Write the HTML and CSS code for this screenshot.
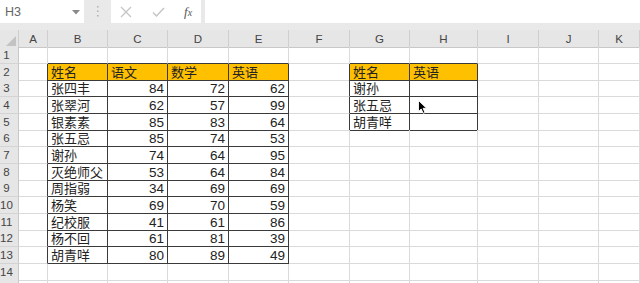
FILE: index.html
```html
<!DOCTYPE html>
<html lang="zh">
<head>
<meta charset="utf-8">
<link rel="stylesheet" href="styles.css">
</head>
<body>
<div class="app">
  <div class="fbar">
    <div class="namebox">
      <span class="ref">H3</span>
      <svg class="dd" width="8" height="5" viewBox="0 0 8 5"><path d="M0 0H8L4 4.5Z" fill="#8a8a8a"/></svg>
    </div>
    <div class="grip"><svg width="3" height="11" viewBox="0 0 3 11"><rect x="1" y="0" width="1.5" height="1.5" fill="#b0b0b0"/><rect x="1" y="4.5" width="1.5" height="1.5" fill="#b0b0b0"/><rect x="1" y="9" width="1.5" height="1.5" fill="#b0b0b0"/></svg></div>
    <div class="btns">
      <svg class="ico" width="12" height="12" viewBox="0 0 12 12"><path d="M1 1L11 11M11 1L1 11" stroke="#c4c4c4" stroke-width="1.3" fill="none"/></svg>
      <svg class="ico" width="13" height="10" viewBox="0 0 13 10"><path d="M1 5.5L4.5 9L12 1" stroke="#c4c4c4" stroke-width="1.4" fill="none"/></svg>
      <span class="fx"><i>f</i><i class="sub">x</i></span>
    </div>
    <div class="formula"></div>
  </div>

  <div class="sheet">
    <div class="row hdr">
      <div class="corner"><svg width="10" height="10" viewBox="0 0 10 10"><path d="M10 0V10H0Z" fill="#c3c3c3"/></svg></div>
      <div class="ch">A</div><div class="ch">B</div><div class="ch">C</div><div class="ch">D</div><div class="ch">E</div><div class="ch">F</div><div class="ch">G</div><div class="ch">H</div><div class="ch">I</div><div class="ch">J</div><div class="ch">K</div>
    </div>
    <div class="row">
      <div class="rh">1</div><div class="c"></div><div class="c bb"></div><div class="c bb"></div><div class="c bb"></div><div class="c bb"></div><div class="c"></div><div class="c bb"></div><div class="c bb"></div><div class="c"></div><div class="c"></div><div class="c"></div>
    </div>
    <div class="row">
      <div class="rh">2</div><div class="c br"></div><div class="c o br bb">姓名</div><div class="c o br bb">语文</div><div class="c o br bb">数学</div><div class="c o br bb">英语</div><div class="c br"></div><div class="c o br bb">姓名</div><div class="c o br bb">英语</div><div class="c"></div><div class="c"></div><div class="c"></div>
    </div>
    <div class="row">
      <div class="rh">3</div><div class="c br"></div><div class="c br bb">张四丰</div><div class="c n br bb">84</div><div class="c n br bb">72</div><div class="c n br bb">62</div><div class="c br"></div><div class="c br bb">谢孙</div><div class="c br bb"></div><div class="c"></div><div class="c"></div><div class="c"></div>
    </div>
    <div class="row">
      <div class="rh">4</div><div class="c br"></div><div class="c br bb">张翠河</div><div class="c n br bb">62</div><div class="c n br bb">57</div><div class="c n br bb">99</div><div class="c br"></div><div class="c br bb">张五忌</div><div class="c br bb"></div><div class="c"></div><div class="c"></div><div class="c"></div>
    </div>
    <div class="row">
      <div class="rh">5</div><div class="c br"></div><div class="c br bb">银素素</div><div class="c n br bb">85</div><div class="c n br bb">83</div><div class="c n br bb">64</div><div class="c br"></div><div class="c br bb">胡青咩</div><div class="c br bb"></div><div class="c"></div><div class="c"></div><div class="c"></div>
    </div>
    <div class="row">
      <div class="rh">6</div><div class="c br"></div><div class="c br bb">张五忌</div><div class="c n br bb">85</div><div class="c n br bb">74</div><div class="c n br bb">53</div><div class="c"></div><div class="c"></div><div class="c"></div><div class="c"></div><div class="c"></div><div class="c"></div>
    </div>
    <div class="row">
      <div class="rh">7</div><div class="c br"></div><div class="c br bb">谢孙</div><div class="c n br bb">74</div><div class="c n br bb">64</div><div class="c n br bb">95</div><div class="c"></div><div class="c"></div><div class="c"></div><div class="c"></div><div class="c"></div><div class="c"></div>
    </div>
    <div class="row">
      <div class="rh">8</div><div class="c br"></div><div class="c br bb">灭绝师父</div><div class="c n br bb">53</div><div class="c n br bb">64</div><div class="c n br bb">84</div><div class="c"></div><div class="c"></div><div class="c"></div><div class="c"></div><div class="c"></div><div class="c"></div>
    </div>
    <div class="row">
      <div class="rh">9</div><div class="c br"></div><div class="c br bb">周指弱</div><div class="c n br bb">34</div><div class="c n br bb">69</div><div class="c n br bb">69</div><div class="c"></div><div class="c"></div><div class="c"></div><div class="c"></div><div class="c"></div><div class="c"></div>
    </div>
    <div class="row">
      <div class="rh">10</div><div class="c br"></div><div class="c br bb">杨笑</div><div class="c n br bb">69</div><div class="c n br bb">70</div><div class="c n br bb">59</div><div class="c"></div><div class="c"></div><div class="c"></div><div class="c"></div><div class="c"></div><div class="c"></div>
    </div>
    <div class="row">
      <div class="rh">11</div><div class="c br"></div><div class="c br bb">纪校服</div><div class="c n br bb">41</div><div class="c n br bb">61</div><div class="c n br bb">86</div><div class="c"></div><div class="c"></div><div class="c"></div><div class="c"></div><div class="c"></div><div class="c"></div>
    </div>
    <div class="row">
      <div class="rh">12</div><div class="c br"></div><div class="c br bb">杨不回</div><div class="c n br bb">61</div><div class="c n br bb">81</div><div class="c n br bb">39</div><div class="c"></div><div class="c"></div><div class="c"></div><div class="c"></div><div class="c"></div><div class="c"></div>
    </div>
    <div class="row">
      <div class="rh">13</div><div class="c br"></div><div class="c br bb">胡青咩</div><div class="c n br bb">80</div><div class="c n br bb">89</div><div class="c n br bb">49</div><div class="c"></div><div class="c"></div><div class="c"></div><div class="c"></div><div class="c"></div><div class="c"></div>
    </div>
    <div class="row">
      <div class="rh">14</div><div class="c"></div><div class="c"></div><div class="c"></div><div class="c"></div><div class="c"></div><div class="c"></div><div class="c"></div><div class="c"></div><div class="c"></div><div class="c"></div><div class="c"></div>
    </div>
    <div class="row">
      <div class="rh"></div><div class="c"></div><div class="c"></div><div class="c"></div><div class="c"></div><div class="c"></div><div class="c"></div><div class="c"></div><div class="c"></div><div class="c"></div><div class="c"></div><div class="c"></div>
    </div>
  </div>

  <svg class="cursor" width="11" height="14" viewBox="0 0 11 14"><path d="M0.5 0.5V11.5L3.2 9L5.2 13.3L7 12.5L5.1 8.3H8.6Z" fill="#000" stroke="#fff" stroke-width="0.9" stroke-linejoin="round"/></svg>
</div>
</body>
</html>
```

FILE: styles.css
```css
* { box-sizing: border-box; }
html, body { margin: 0; padding: 0; }
body {
  width: 640px;
  height: 283px;
  overflow: hidden;
  background: #fff;
  font-family: "Liberation Sans", "Noto Sans CJK SC", sans-serif;
}
.app {
  position: relative;
  width: 640px;
  height: 283px;
  overflow: hidden;
}
.fbar {
  display: flex;
  height: 30px;
  padding-bottom: 7px;
  background: #e9e9e9;
}
.namebox {
  width: 84px;
  background: #fff;
  display: flex;
  align-items: center;
  justify-content: space-between;
  padding: 0 4px 0 5px;
}
.ref {
  font-size: 12.5px;
  color: #666;
}
.dd { margin-top: 1px; }
.grip {
  width: 27px;
  display: flex;
  align-items: center;
  justify-content: center;
  padding-right: 1px;
}
.btns {
  width: 90px;
  background: #fff;
  display: flex;
  align-items: center;
  padding-left: 9px;
  gap: 20px;
}
.fx {
  font-family: "Liberation Serif", serif;
  color: #555;
  font-size: 13px;
  margin-left: -1px;
}
.fx .sub { font-size: 10px; }
.formula {
  flex: 1;
  margin-left: 4px;
  background: #fff;
}
.row {
  display: grid;
  grid-template-columns: 19px 29px 60px 60px 61px 60px 61px 60px 68px 61px 60px 41px;
  height: 16.667px;
}
.row.hdr {
  height: 17px;
  background: #e6e6e6;
}
.corner {
  display: flex;
  align-items: flex-end;
  justify-content: flex-end;
  padding: 0 2px 1px 0;
  border-right: 1px solid #cfcfcf;
  border-bottom: 1px solid #c8c8c8;
}
.ch {
  border-right: 1px solid #cfcfcf;
  border-bottom: 1px solid #c8c8c8;
  font-size: 11.5px;
  color: #444;
  text-align: center;
  line-height: 16px;
  padding-top: 1px;
}
.rh {
  background: #e6e6e6;
  border-right: 1px solid #c8c8c8;
  border-bottom: 1px solid #d4d4d4;
  font-size: 11.5px;
  color: #444;
  text-align: center;
  padding-right: 5px;
  line-height: 16px;
  white-space: nowrap;
}
.c {
  border-right: 1px solid #dadada;
  border-bottom: 1px solid #dadada;
  font-size: 13px;
  color: #222;
  line-height: 15px;
  padding: 0 3px 0 3px;
  display: flex;
  align-items: flex-end;
  white-space: nowrap;
  overflow: hidden;
}
.c.n {
  justify-content: flex-end;
  font-size: 13.5px;
}
.c.o { background: #ffc000; }
.c.br { border-right-color: #3a3a3a; }
.c.bb { border-bottom-color: #3a3a3a; }
.cursor {
  position: absolute;
  left: 418px;
  top: 100px;
}
```
